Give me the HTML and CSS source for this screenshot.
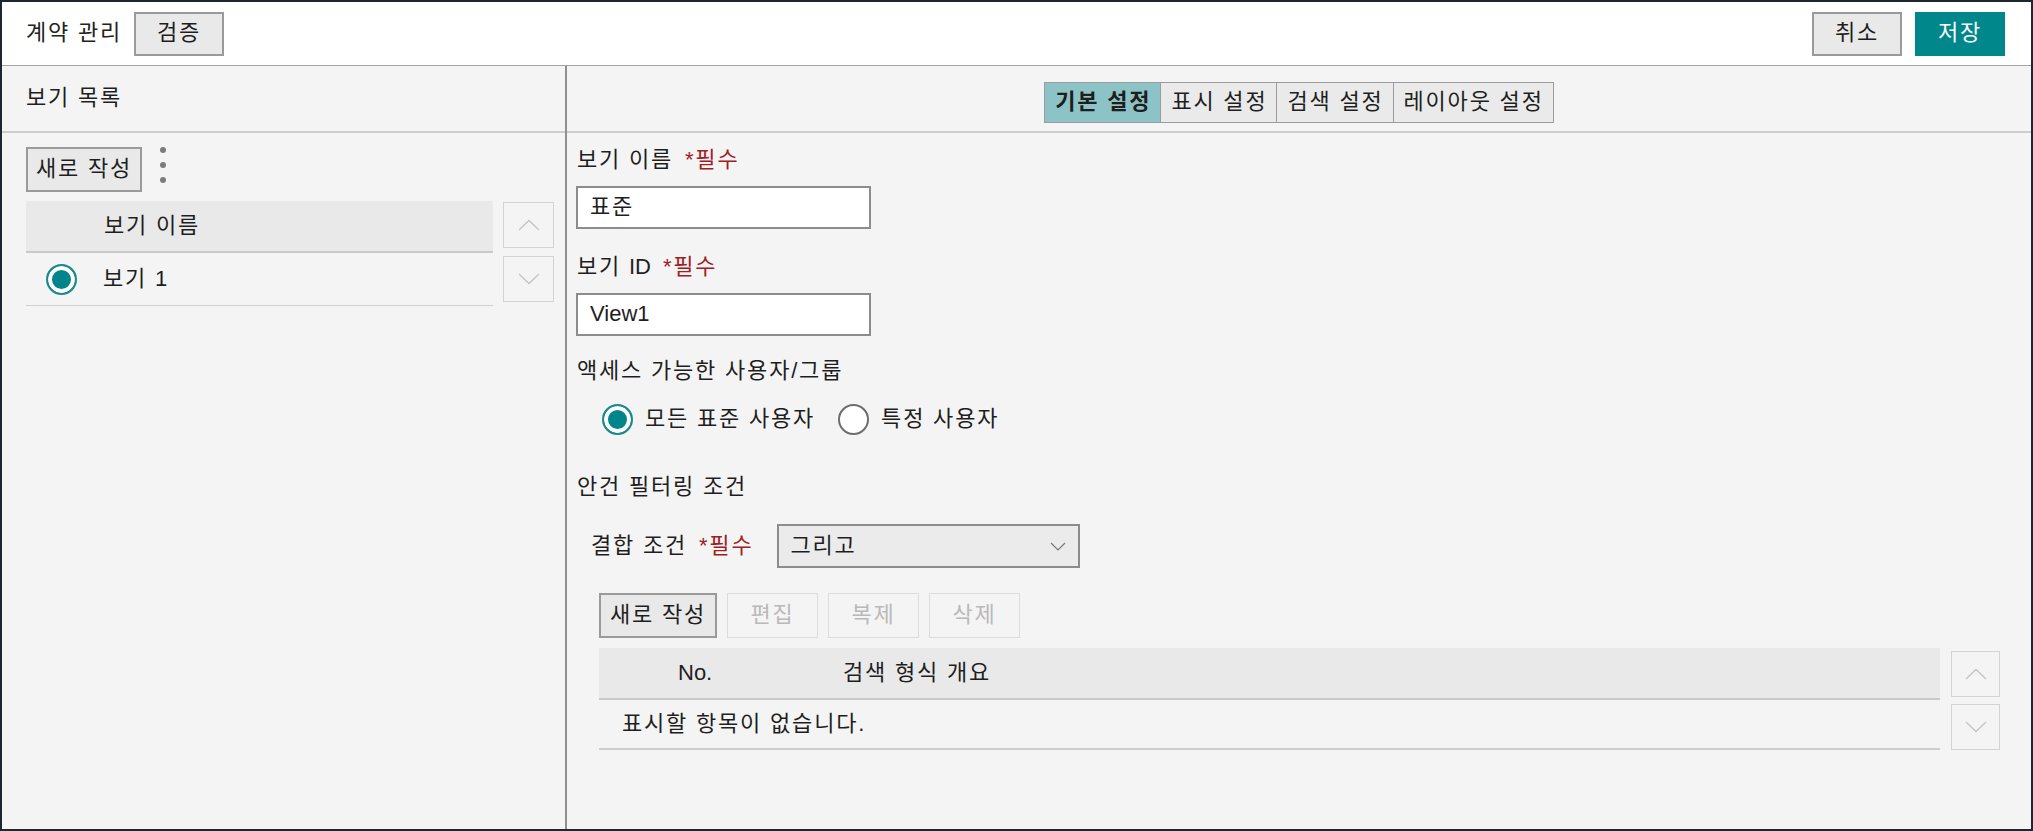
FILE: index.html
```html
<!DOCTYPE html>
<html lang="ko">
<head>
<meta charset="utf-8">
<title>계약 관리</title>
<link rel="stylesheet" href="styles.css">
</head>
<body>
<div class="app">
  <header class="topbar">
    <div class="topbar-left">
      <span class="title">계약 관리</span>
      <button class="btn btn-top">검증</button>
    </div>
    <div class="topbar-right">
      <button class="btn btn-top">취소</button>
      <button class="btn btn-top btn-primary">저장</button>
    </div>
  </header>
  <div class="body">
    <aside class="side">
      <div class="side-head">보기 목록</div>
      <div class="side-content">
        <div class="side-toolbar">
          <button class="btn btn-new">새로 작성</button>
          <span class="kebab"><i></i><i></i><i></i></span>
        </div>
        <div class="list-wrap">
          <div class="list">
            <div class="list-head"><span class="list-head-text">보기 이름</span></div>
            <div class="list-row">
              <span class="radio radio-on"></span>
              <span class="list-row-text">보기 <span class="latin">1</span></span>
            </div>
          </div>
          <div class="movers">
            <button class="mover"><svg width="22" height="12" viewBox="0 0 22 12"><polyline points="1,11 11,1.5 21,11" fill="none" stroke="#c4c4c4" stroke-width="1.3"/></svg></button>
            <button class="mover"><svg width="22" height="12" viewBox="0 0 22 12"><polyline points="1,1 11,10.5 21,1" fill="none" stroke="#c4c4c4" stroke-width="1.3"/></svg></button>
          </div>
        </div>
      </div>
    </aside>
    <main class="main">
      <div class="tabs-bar">
        <div class="tabs">
          <button class="tab tab-active">기본 설정</button>
          <button class="tab">표시 설정</button>
          <button class="tab">검색 설정</button>
          <button class="tab">레이아웃 설정</button>
        </div>
      </div>
      <div class="form">
        <div class="label label-first">보기 이름 <span class="req">*필수</span></div>
        <div class="input">표준</div>
        <div class="label label-next">보기 <span class="latin">ID</span> <span class="req">*필수</span></div>
        <div class="input latin">View1</div>
        <div class="label label-access">액세스 가능한 사용자/그룹</div>
        <div class="radio-group">
          <span class="radio radio-on"></span>
          <span class="radio-label">모든 표준 사용자</span>
          <span class="radio"></span>
          <span class="radio-label">특정 사용자</span>
        </div>
        <div class="label label-filter">안건 필터링 조건</div>
        <div class="combo-row">
          <span class="combo-label">결합 조건 <span class="req">*필수</span></span>
          <div class="select">
            <span>그리고</span>
            <svg width="16" height="9" viewBox="0 0 16 9"><polyline points="1,1 8,8 15,1" fill="none" stroke="#777" stroke-width="1.2"/></svg>
          </div>
        </div>
        <div class="actions">
          <button class="btn btn-act">새로 작성</button>
          <button class="btn btn-act btn-disabled">편집</button>
          <button class="btn btn-act btn-disabled">복제</button>
          <button class="btn btn-act btn-disabled">삭제</button>
        </div>
        <div class="grid-wrap">
          <div class="grid">
            <div class="grid-head">
              <span class="col-no latin">No.</span>
              <span class="col-summary">검색 형식 개요</span>
            </div>
            <div class="grid-row">표시할 항목이 없습니다.</div>
          </div>
          <div class="movers movers-grid">
            <button class="mover"><svg width="22" height="12" viewBox="0 0 22 12"><polyline points="1,11 11,1.5 21,11" fill="none" stroke="#c4c4c4" stroke-width="1.3"/></svg></button>
            <button class="mover"><svg width="22" height="12" viewBox="0 0 22 12"><polyline points="1,1 11,10.5 21,1" fill="none" stroke="#c4c4c4" stroke-width="1.3"/></svg></button>
          </div>
        </div>
      </div>
    </main>
  </div>
</div>
</body>
</html>
```
FILE: styles.css
```css
* { box-sizing: border-box; }
html, body { margin: 0; padding: 0; }
body {
  font-family: "Liberation Sans", "Noto Sans CJK KR", sans-serif;
  font-size: 22px;
  line-height: 1.3;
  letter-spacing: 1.8px;
  color: #1e1e1e;
  background: #fff;
}
button { font: inherit; color: inherit; margin: 0; letter-spacing: inherit; }
.latin { letter-spacing: 0; }

.app {
  width: 2033px;
  height: 831px;
  border: 2px solid #1d2631;
  display: flex;
  flex-direction: column;
  background: #f4f4f4;
}

/* top bar */
.topbar {
  flex: none;
  height: 64px;
  background: #fff;
  border-bottom: 1px solid #a3a3a3;
  display: flex;
  align-items: center;
  justify-content: space-between;
  padding: 0 26px 0 24px;
}
.topbar-left, .topbar-right { display: flex; align-items: center; gap: 13px; }
.topbar-left { gap: 12px; }
.title { color: #222; }

.btn {
  background: #e9e9e9;
  border: 2px solid #9a9a9a;
  padding: 0;
  display: inline-flex;
  align-items: center;
  justify-content: center;
  cursor: pointer;
}
.btn-top { width: 90px; height: 44px; }
.btn-primary { background: #00878b; border-color: #00878b; color: #fff; }

/* body */
.body { flex: 1; display: flex; min-height: 0; }

.side {
  width: 565px;
  flex: none;
  border-right: 2px solid #8f8f8f;
  display: flex;
  flex-direction: column;
}
.side-head {
  height: 67px;
  border-bottom: 2px solid #cdcdcd;
  display: flex;
  align-items: center;
  padding-left: 24px;
}
.side-content { padding: 14px 9px 0 24px; }
.side-toolbar { display: flex; align-items: center; gap: 18px; }
.btn-new { width: 116px; height: 45px; }
.kebab { display: flex; flex-direction: column; gap: 9px; margin-top: -9px; }
.kebab i { width: 6px; height: 6px; border-radius: 50%; background: #7a7c80; display: block; }

.list-wrap { display: flex; gap: 10px; margin-top: 9px; }
.list { width: 467px; }
.list-head {
  height: 52px;
  background: #e9e9e9;
  border-bottom: 2px solid #c9c9c9;
  display: flex;
  align-items: center;
  padding-left: 78px;
}
.list-row {
  height: 53px;
  border-bottom: 1px solid #cfcfcf;
  display: flex;
  align-items: center;
  padding-left: 20px;
  gap: 26px;
}

.radio {
  width: 31px;
  height: 31px;
  border-radius: 50%;
  border: 2px solid #6d6d6d;
  background: #fff;
  flex: none;
  display: inline-block;
}
.radio-on {
  border-color: #1a8a8d;
  background: #00858a;
  box-shadow: inset 0 0 0 4px #fff;
}

.movers { display: flex; flex-direction: column; gap: 8px; padding-top: 1px; }
.mover {
  width: 51px;
  height: 46px;
  border: 1px solid #d3d3d3;
  background: #f4f4f4;
  padding: 0;
  display: flex;
  align-items: center;
  justify-content: center;
}

/* main */
.main { flex: 1; display: flex; flex-direction: column; min-width: 0; }
.tabs-bar {
  height: 67px;
  border-bottom: 2px solid #cdcdcd;
  display: flex;
  justify-content: center;
  align-items: flex-start;
  padding-top: 16px;
}
.tabs { display: flex; }
.tab {
  height: 41px;
  background: #eaeaea;
  border: 1px solid #9c9c9c;
  margin-left: -1px;
  padding: 0 9px 0 10px;
  display: flex;
  align-items: center;
}
.tab:first-child { margin-left: 0; }
.tab-active { background: #8cc3c6; font-weight: bold; }

.form { padding: 0 0 0 9px; display: flex; flex-direction: column; align-items: flex-start; }
.label { height: 30px; line-height: 30px; padding-left: 1px; }
.label-first { margin-top: 12px; }
.label-next { margin-top: 23px; }
.label-access { margin-top: 20px; }
.label-filter { margin-top: 36px; }
.req { color: #a0201f; margin-left: 4px; }

.input {
  width: 295px;
  height: 43px;
  margin-top: 11px;
  background: #fff;
  border: 2px solid #8c8c8c;
  padding-left: 12px;
  display: flex;
  align-items: center;
}

.radio-group {
  display: flex;
  align-items: center;
  margin-top: 16px;
  margin-left: 26px;
  height: 34px;
}
.radio-group .radio-label { margin-left: 12px; margin-right: 23px; }

.combo-row { display: flex; align-items: center; margin-top: 22px; margin-left: 15px; }
.combo-label { margin-right: 24px; }
.select {
  width: 303px;
  height: 44px;
  background: #ebebeb;
  border: 2px solid #8c8c8c;
  display: flex;
  align-items: center;
  justify-content: space-between;
  padding: 0 12px 0 11px;
}

.actions { display: flex; gap: 10px; margin-top: 25px; margin-left: 23px; }
.btn-act { height: 45px; width: 91px; }
.btn-act:first-child { width: 118px; }
.btn-disabled { border-color: #dcdcdc; background: #f4f4f4; color: #b9b9b9; border-width: 1px; }

.grid-wrap { display: flex; gap: 11px; margin-top: 10px; margin-left: 23px; align-self: stretch; padding-right: 31px; }
.grid { flex: 1; }
.grid-head {
  height: 52px;
  background: #e9e9e9;
  border-bottom: 2px solid #c9c9c9;
  display: flex;
  align-items: center;
}
.col-no { margin-left: 79px; width: 165px; }
.grid-row {
  height: 50px;
  border-bottom: 2px solid #cdcdcd;
  display: flex;
  align-items: center;
  padding-left: 23px;
}
.movers-grid .mover { width: 49px; height: 46px; }
.movers-grid { gap: 7px; padding-top: 3px; }
```
